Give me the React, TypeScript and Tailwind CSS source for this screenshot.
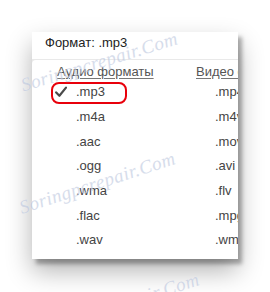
import React from 'react';

const audio = ['.mp3', '.m4a', '.aac', '.ogg', '.wma', '.flac', '.wav'];
const video = ['.mp4', '.m4v', '.mov', '.avi', '.flv', '.mpg', '.wmv'];

function Check() {
  return (
    <svg width="12" height="12" viewBox="0 0 12 12" className="shrink-0">
      <path d="M1.2 6.4 L4.4 9.8 L11 1.6" fill="none" stroke="#4a4a4a" strokeWidth="2.2" strokeLinecap="round" strokeLinejoin="round" />
    </svg>
  );
}

function Watermark({ className }: { className: string }) {
  return (
    <div
      className={`absolute pointer-events-none whitespace-nowrap italic text-[19px] tracking-[0.5px] text-[#bcc7de] opacity-60 [text-shadow:0_0_1px_#fff] ${className}`}
      style={{ fontFamily: '"Liberation Serif", "DejaVu Serif", serif' }}
    >
      Soringpcrepair.Com
    </div>
  );
}

export default function App() {
  return (
    <div
      className="relative w-[270px] h-[292px] bg-white overflow-hidden"
      style={{ fontFamily: '"Liberation Sans", Arial, sans-serif' }}
    >
      <div className="ml-[32px] mt-[32px] w-[206px] h-[227px] flex flex-col bg-[#e9e9e9] overflow-hidden shadow-[4px_5px_4px_rgba(0,0,0,0.3),0_12px_24px_rgba(0,0,0,0.3)]">
        <div className="h-[27px] shrink-0 bg-white pl-[13px] pt-[3px] text-[13px] leading-[16px] text-[#222]">
          Формат: .mp3
        </div>
        <div className="mt-[1px] flex-1 bg-white rounded-tl-[4px] flex pt-[4px] text-[13px] leading-[16px]">
          <div className="w-[164px] shrink-0 pl-[23px]">
            <div className="h-[16px] ml-[2px] text-[#555] underline decoration-[#777] underline-offset-[2px]">
              Аудио форматы
            </div>
            {audio.map((a, i) => (
              <div key={a} className="relative h-[24.7px] flex items-center text-[#444]">
                <div className="w-[21px] flex justify-start">{i === 0 && <Check />}</div>
                <span>{a}</span>
                {i === 0 && (
                  <div className="absolute left-[-4px] top-[2px] w-[76px] h-[22px] border-[2.5px] border-[#e8000b] rounded-[8px]" />
                )}
              </div>
            ))}
          </div>
          <div className="flex-1 overflow-hidden whitespace-nowrap">
            <div className="h-[16px] text-[#555] underline decoration-[#777] underline-offset-[2px]">
              Видео форматы
            </div>
            {video.map((v) => (
              <div key={v} className="h-[24.7px] flex items-center pl-[19px] text-[#444]">
                {v}
              </div>
            ))}
          </div>
        </div>
      </div>
      <Watermark className="left-[18px] top-[48px] -rotate-[17deg]" />
      <Watermark className="left-[16px] top-[169px] -rotate-[18deg]" />
      <Watermark className="left-[40px] top-[290px] -rotate-[18deg]" />
    </div>
  );
}
